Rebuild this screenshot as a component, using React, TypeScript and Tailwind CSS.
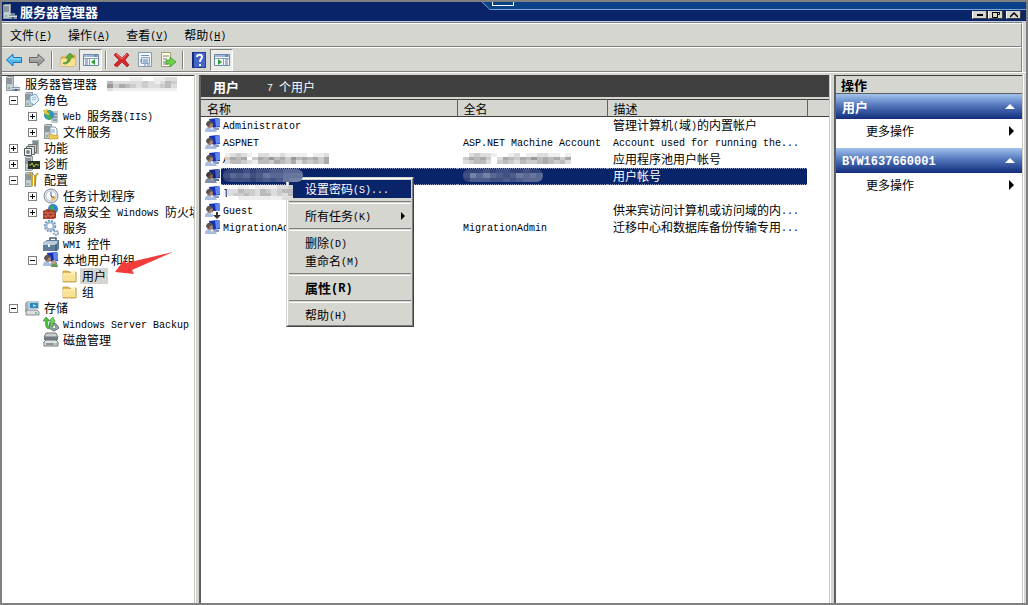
import type { ReactNode } from 'react'

type IconName =
  | 'server' | 'roles' | 'web' | 'files' | 'features' | 'diagnostics' | 'config' | 'clock'
  | 'firewall' | 'gears' | 'toolbox' | 'users' | 'folder' | 'storage' | 'backup' | 'disk'
  | 'user' | 'guest' | 'back' | 'forward' | 'up' | 'paneLeft' | 'paneRight' | 'remove'
  | 'properties' | 'exportList' | 'help'

const tower = (
  <>
    <path d="M1 1 3 0h6v14l-2 1H1z" fill="#8d979c" />
    <path d="M2 1h6v13H2z" fill="#c3ccd0" />
    <path d="M2 3h5M2 5h5M2 7h5" stroke="#566168" />
    <path d="M3 12h2" stroke="#4b9a52" />
  </>
)

const person = (
  <>
    <path d="M4 1 13 0l2 1v8l-9 1z" fill="#1430b8" />
    <path d="M10 1l3-1 2 1v7l-4 1z" fill="#5f86ee" />
    <path d="M9 10h5v2H9z" fill="#8b97b5" />
    <path d="M0 14c0-4 2-5 5-5s6 2 7 5z" fill="#a9bde0" />
    <path d="M5 9l2 3 1-3z" fill="#fff" />
    <circle cx="5" cy="7" r="3" fill="#a98468" />
    <path d="M1 7c0-3 2-5 5-4l2 2-3 1-1 3z" fill="#5d5350" />
  </>
)

const windowFrame = (
  <>
    <path d="M.5 2.5h15v11H.5z" fill="#f6f9fc" stroke="#6f86a5" />
    <path d="M1 3h14v2H1z" fill="#9fb9db" />
    <path d="M11 4h3" stroke="#40608c" />
    <path d="M1 6.500h14" stroke="#8aa0bd" />
  </>
)

const icons: Record<IconName, ReactNode> = {
  server: (
    <>
      {tower}
      <path d="M7 11h8v4H7z" fill="#8398a9" />
      <path d="M8 10h5M7 12.500h8" stroke="#cfdce5" />
      <path d="M10 13h2v2h-2z" fill="#45596a" />
    </>
  ),
  roles: (
    <>
      {tower}
      <path d="M6 4l6-2 3 6-5 5-4-3z" fill="#e9f4fd" stroke="#73a5cf" />
      <path d="M8 6l4-1M8 8l4-1" stroke="#8fb7da" />
    </>
  ),
  web: (
    <>
      <path d="M9 3h6v12H8z" fill="#bec8cd" />
      <path d="M10 6h4M10 9h4M10 12h4" stroke="#657981" />
      <circle cx="6" cy="7" r="5" fill="#2d93c4" />
      <path d="M2 5c2-3 5-3 6-2L6 7l3 3-2 2C4 12 4 8 2 7z" fill="#4fae4a" />
      <path d="M0 2l5-1-1 3 3 2-2 1-4-2z" fill="#e8c640" />
    </>
  ),
  files: (
    <>
      {tower}
      <path d="M7 3h5l2 2v7H7z" fill="#fff" stroke="#7d98b0" />
      <path d="M8 6h4M8 8h4" stroke="#74a3cf" />
      <path d="M6 10h3l1 1h5v4H6z" fill="#f0c653" stroke="#b38c2e" strokeWidth=".5" />
    </>
  ),
  features: (
    <>
      <path d="M8 0h7v14H8z" fill="#aab3b7" />
      <path d="M9 2h5M9 4h5" stroke="#59646a" />
      <path d="M4.500 4.500h8v8h-8z" fill="#c7ced1" stroke="#777" />
      <path d="M2.500 6.500h8v8h-8z" fill="#dbe0e2" stroke="#666" />
      <path d="M.500 8.500h7v7h-7z" fill="#eef1f2" stroke="#555" />
      <circle cx="4" cy="12" r="2" fill="#7a8790" />
    </>
  ),
  diagnostics: (
    <>
      {tower}
      <path d="M4 5h12v8H4z" fill="#253129" />
      <path d="M5 9h2l1-2 2 4 2-3 1 1h2" fill="none" stroke="#b4c43d" />
    </>
  ),
  config: (
    <>
      {tower}
      <path d="M6 1l2 3v10M14 1l-3 4v9" fill="none" stroke="#d9a322" strokeWidth="2" />
      <path d="M9 2l3 3-1 10" fill="none" stroke="#7f8a92" strokeWidth="1" />
    </>
  ),
  clock: (
    <>
      <circle cx="8" cy="8" r="7" fill="#e5e9ed" stroke="#7f8990" />
      <circle cx="8" cy="8" r="5" fill="#fff" stroke="#b9c4cc" />
      <path d="M8 8h5A5 5 0 0 1 8 13z" fill="#f0c869" />
      <path d="M8 4v4l3 2" fill="none" stroke="#34588c" />
    </>
  ),
  firewall: (
    <>
      <circle cx="10" cy="5" r="5" fill="#2f87c8" />
      <path d="M7 2l4 1-1 3 4 1-2 3-4-3z" fill="#4da74d" />
      <path d="M0 7l4-2 9 2v7l-3 1H0z" fill="#a8321f" />
      <path d="M0 9h12M0 12h12M3 6v3M8 7v2M5 9v3M10 9v3M3 12v3M8 12v3" stroke="#dd9a8b" strokeWidth=".6" />
    </>
  ),
  gears: (
    <>
      <circle cx="7" cy="6" r="5" fill="none" stroke="#7899bb" strokeWidth="2.500" strokeDasharray="2 1" />
      <circle cx="7" cy="6" r="3.500" fill="#fff" stroke="#9db9d4" strokeWidth="2" />
      <circle cx="13" cy="13" r="2" fill="#fff" stroke="#7899bb" strokeWidth="2" strokeDasharray="1.500 .7" />
    </>
  ),
  toolbox: (
    <>
      <path d="M7 5V2h6v3" fill="none" stroke="#4a6176" strokeWidth="1.500" />
      <path d="M0 7l4-3h12v9l-2 2H0z" fill="#5f7d99" />
      <path d="M0 7l4-2h11l-2 4H0z" fill="#b9cbd9" />
      <path d="M5 8h2v3H5z" fill="#eef3f6" />
      <path d="M13 8v7" stroke="#364f66" />
    </>
  ),
  users: (
    <>
      {person}
      <path d="M8 15c0-3 1-4 3-4s4 1 4 4z" fill="#6a9a57" />
      <circle cx="11" cy="10" r="2" fill="#c79c77" />
    </>
  ),
  folder: (
    <>
      <path d="M1 3h5l1 1h7v10H1z" fill="#e2b954" stroke="#b48f35" strokeWidth=".7" />
      <path d="M9 2h4v3H9z" fill="#fff8de" />
      <path d="M1 5h13v9H1z" fill="#f9e293" />
      <path d="M2 6h11" stroke="#fff4c6" />
      <path d="M1 13.500h13V5" fill="none" stroke="#c9a345" strokeWidth=".8" />
    </>
  ),
  storage: (
    <>
      <path d="M1 3l3-2v11H1z" fill="#a7b2b8" />
      <path d="M4 1h11v8H4z" fill="#b8cbd6" />
      <path d="M6 3h8v5H6z" fill="#2b87b9" />
      <path d="M9 4l4 2-4 1z" fill="#9ed5ee" />
      <path d="M2 10h11l2 2v3H2z" fill="#d9dee1" stroke="#68757d" strokeWidth=".8" />
      <path d="M11 13h2" stroke="#31a24a" />
    </>
  ),
  backup: (
    <>
      <path d="M7 6l6 2 3 4-5 3-5-3z" fill="#a8b0b5" stroke="#646d72" />
      <circle cx="11" cy="11" r="2" fill="#ecf0f2" stroke="#737c81" />
      <path d="M5 13C2 11 2 6 3 5L0 5l3-4 4 4H5c-1 3 0 5 2 7z" fill="#4fc13f" stroke="#288b27" strokeWidth=".6" />
      <path d="M10 1l2 5-2 1v4l-3-2 1-4-1-1z" fill="#73d356" stroke="#288b27" strokeWidth=".6" />
    </>
  ),
  disk: (
    <>
      <path d="M3 1h10l2 4H1z" fill="#c9ced1" stroke="#71777a" />
      <path d="M1 5h14v3H1z" fill="#747b80" />
      <path d="M3 8h10l2 2v4H1v-4z" fill="#dfe3e4" stroke="#6d7478" />
      <path d="M3 12h8" stroke="#444" />
      <path d="M12 12h2" stroke="#4ca34c" />
    </>
  ),
  user: person,
  guest: (
    <>
      {person}
      <path d="M8 8h8v8H8z" fill="#fff" />
      <path d="M11 9h2v3h3l-4 4-4-4h3z" fill="#333" />
    </>
  ),
  back: (
    <>
      <path d="M.500 8 7 2v3.500h8.500v5H7V14z" fill="#4bb8ef" stroke="#1d72b8" />
      <path d="M3 8l3-3v2h9" fill="none" stroke="#a9e2fb" />
    </>
  ),
  forward: (
    <>
      <path d="M15.500 8 9 2v3.500H.500v5H9V14z" fill="#9b9c9b" stroke="#686968" />
      <path d="M1 7h9V5l3 3" fill="none" stroke="#c6c6c4" />
    </>
  ),
  up: (
    <>
      <path d="M1 5h5l1-2h8v11H1z" fill="#efc75b" stroke="#b78c2c" strokeWidth=".6" />
      <path d="M1 7h14v7H1z" fill="#fbe291" />
      <path d="M3 11c4 0 5-3 5-5H6l4-5 4 4h-3c0 4-3 7-7 7z" fill="#58b436" stroke="#2c7b22" strokeWidth=".6" />
    </>
  ),
  paneLeft: (
    <>
      {windowFrame}
      <path d="M6.500 6v8" stroke="#8aa0bd" />
      <path d="M2 8h3M2 10h3M2 12h3" stroke="#4f78ac" />
      <path d="M12 7v6L8 10z" fill="#2c9d33" />
    </>
  ),
  paneRight: (
    <>
      {windowFrame}
      <path d="M9.500 6v8" stroke="#8aa0bd" />
      <path d="M11 8h3M11 10h3M11 12h3" stroke="#4f78ac" />
      <path d="M4 7v6l4-3z" fill="#2c9d33" />
    </>
  ),
  remove: (
    <>
      <path d="M2 1l6 5 5-5 2 2-4 5 4 5-2 2-5-5-5 5-3-2 5-5-5-5z" fill="#d7262a" stroke="#9c1317" strokeWidth=".6" />
      <path d="M2 2l6 5 5-5" fill="none" stroke="#ef7777" />
    </>
  ),
  properties: (
    <>
      <path d="M1.500.500h13v14h-13z" fill="#f5f8fa" stroke="#8399ad" />
      <path d="M4 3.500h8" stroke="#6e92b6" />
      <path d="M4.500 5.500h8v6h-8z" fill="#dce8f1" stroke="#8ba6bd" />
      <path d="M3 8h2M6 8h5M3 10h2M6 10h5M7 13h2M10 13h3" stroke="#5f8db8" />
    </>
  ),
  exportList: (
    <>
      <path d="M1.500.500h9v14h-9z" fill="#fffbe3" stroke="#a69b70" />
      <path d="M3 4h6M3 7h4M3 10h4M3 12h5" stroke="#6d7d9c" />
      <path d="M6 8h4V5l6 5-6 5v-3H6z" fill="#6ed04d" stroke="#35912b" strokeWidth=".7" />
    </>
  ),
  help: (
    <>
      <path d="M1 0h14v16H1z" fill="#23429d" />
      <path d="M3 1h11v14H3z" fill="#4267c8" />
      <path d="M1 0h2v16H1z" fill="#162d75" />
      <path d="M6 5c0-3 5-3 5 0 0 2-2 2-2 5" fill="none" stroke="#fff" strokeWidth="2" />
      <path d="M8 12h2v2H8z" fill="#fff" />
    </>
  ),
}

const Icon = ({ name, className = 'size-4' }: { name: IconName; className?: string }) => (
  <svg viewBox="0 0 16 16" className={`shrink-0 ${className}`} aria-hidden="true">
    {icons[name]}
  </svg>
)

const latinFace = "align-[1px] leading-none font-['Liberation_Mono',monospace]"

// Latin runs use a half-width mono face so they keep step with the full-width characters.
const Text = ({ children, hotkey, latin = 'text-[10px]' }: { children: string; hotkey?: string; latin?: string }) => (
  <span className="whitespace-pre">
    {children.split(/([\x20-\x7e]+)/).map((run, i) =>
      i % 2 === 0 ? (
        run
      ) : (
        <span key={i} className={`${latinFace} ${latin}`}>
          {run}
        </span>
      ),
    )}
    {hotkey && (
      <span className={`${latinFace} ${latin}`}>
        (<u>{hotkey}</u>)
      </span>
    )}
  </span>
)

// Each hex digit is the grey of one block.
const Mosaic = ({ rows, className, dark }: { rows: string[]; className: string; dark?: boolean }) => (
  <svg
    viewBox={`0 0 ${rows[0].length} ${rows.length}`}
    preserveAspectRatio="none"
    shapeRendering="crispEdges"
    className={`shrink-0 ${className}`}
    aria-hidden="true"
  >
    {rows.map((row, y) =>
      row.split('').map((c, x) => {
        const v = parseInt(c, 16) * 17
        const fill = dark ? `rgb(${v * 0.75},${v * 0.75 + 16},${v * 0.5 + 88})` : `rgb(${v},${v},${v})`
        return <rect key={`${x}-${y}`} x={x} y={y} width="1" height="1" fill={fill} />
      }),
    )}
  </svg>
)

type Node = {
  label: string
  icon: IconName
  state?: 'open' | 'closed'
  selected?: boolean
  children?: Node[]
}

const tree: Node[] = [
  {
    label: '角色', icon: 'roles', state: 'open',
    children: [
      { label: 'Web 服务器(IIS)', icon: 'web', state: 'closed' },
      { label: '文件服务', icon: 'files', state: 'closed' },
    ],
  },
  { label: '功能', icon: 'features', state: 'closed' },
  { label: '诊断', icon: 'diagnostics', state: 'closed' },
  {
    label: '配置', icon: 'config', state: 'open',
    children: [
      { label: '任务计划程序', icon: 'clock', state: 'closed' },
      { label: '高级安全 Windows 防火墙', icon: 'firewall', state: 'closed' },
      { label: '服务', icon: 'gears' },
      { label: 'WMI 控件', icon: 'toolbox' },
      {
        label: '本地用户和组', icon: 'users', state: 'open',
        children: [
          { label: '用户', icon: 'folder', selected: true },
          { label: '组', icon: 'folder' },
        ],
      },
    ],
  },
  {
    label: '存储', icon: 'storage', state: 'open',
    children: [
      { label: 'Windows Server Backup', icon: 'backup' },
      { label: '磁盘管理', icon: 'disk' },
    ],
  },
]

const TreeItem = ({ node }: { node: Node }) => (
  <li>
    <div className="flex h-4 items-center">
      <span className="flex w-[15px] shrink-0">
        {node.state && (
          <button type="button" aria-label={node.label} className="size-[9px] border border-[#808080] bg-white">
            <svg viewBox="0 0 7 7" className="block size-[7px]">
              <path d={node.state === 'open' ? 'M1 3h5v1H1z' : 'M1 3h5v1H1zM3 1h1v5H3z'} fill="#000" shapeRendering="crispEdges" />
            </svg>
          </button>
        )}
      </span>
      <Icon name={node.icon} />
      <button type="button" className={`ml-0.5 h-4 px-0.5 leading-4 ${node.selected ? 'bg-[#d5d6cf]' : ''}`}>
        <Text>{node.label}</Text>
      </button>
    </div>
    {node.children && (
      <ul className="pl-[19px]">
        {node.children.map((child) => (
          <TreeItem key={child.label} node={child} />
        ))}
      </ul>
    )}
  </li>
)

type User = { name: ReactNode; fullName?: ReactNode; note: string; icon?: IconName; selected?: boolean }

const users: User[] = [
  { name: <Text>Administrator</Text>, note: '管理计算机(域)的内置帐户' },
  {
    name: <Text>ASPNET</Text>,
    fullName: <Text>ASP.NET Machine Account</Text>,
    note: 'Account used for running the...',
  },
  {
    name: (
      <>
        <Text>A</Text>
        <Mosaic className="-ml-1 h-[11px] w-[104px]" rows={['edcdefddeedeeeefeed', 'cabafcab9bac9babaca', 'dbbcdebbcabcadbcbca']} />
      </>
    ),
    fullName: <Mosaic className="h-[11px] w-[108px]" rows={['fdcddeffedfeeddeefe', 'cabacfdabcab9babaca', 'dcbbdfcbcdbccbabcbd']} />,
    note: '应用程序池用户帐号',
  },
  {
    name: <Mosaic dark className="relative z-20 h-[13px] w-20 rounded-md" rows={['444545566777', '576756877888', '455545656899']} />,
    fullName: <Mosaic dark className="h-[13px] w-20 rounded-md" rows={['444545544544', '597976568787', '466655656777']} />,
    note: '用户帐号',
    selected: true,
  },
  {
    name: (
      <>
        <Text>l</Text>
        <Mosaic className="relative z-20 -ml-0.5 h-[15px] w-[66px]" rows={['ffeefeeeeddc', 'ddbccdbcdcbb', 'dccbcdbbdcdb', 'ffeeeeeeeedd']} />
      </>
    ),
    note: '',
  },
  { name: <Text>Guest</Text>, note: '供来宾访问计算机或访问域的内...', icon: 'guest' },
  { name: <Text>MigrationAdmin</Text>, fullName: <Text>MigrationAdmin</Text>, note: '迁移中心和数据库备份传输专用...' },
]

const UserRow = ({ user }: { user: User }) => {
  const mark = user.selected ? 'border-dotted border-[#8f9cc4] bg-[#0a246a] text-white' : 'border-transparent'
  return (
    <tr className="h-[17px]">
      <td className="p-0">
        <div className="flex h-[17px] items-center pl-1">
          <Icon name={user.icon ?? 'user'} className={user.selected ? 'size-4 brightness-75' : 'size-4'} />
          <span className={`flex h-[17px] flex-1 items-center border-y pb-0.5 pl-0.5 ${mark}`}>{user.name}</span>
        </div>
      </td>
      <td className="p-0">
        <div className={`flex h-[17px] items-center border-y pb-0.5 pl-1.5 ${mark}`}>{user.fullName}</div>
      </td>
      <td className="p-0">
        <div className={`flex h-[17px] items-center border-y pb-0.5 pl-1.5 ${mark}`}>
          <Text>{user.note}</Text>
        </div>
      </td>
      <td className="p-0" />
    </tr>
  )
}

const MenuItem = ({ label, hotkey, active, bold, more }: { label: string; hotkey: string; active?: boolean; bold?: boolean; more?: boolean }) => (
  <button
    type="button"
    role="menuitem"
    className={`flex h-[18px] w-full items-center justify-between pr-1.5 pl-4 ${active ? 'bg-[#0a246a] text-white' : ''} ${bold ? 'text-[13px] font-bold' : ''}`}
  >
    <Text latin={bold ? 'text-[12px]' : 'text-[10px]'}>{`${label}(${hotkey})${active ? '...' : ''}`}</Text>
    {more && (
      <svg viewBox="0 0 4 8" className="h-2 w-1">
        <path d="M0 0l4 4-4 4z" />
      </svg>
    )}
  </button>
)

const Separator = () => <hr className="my-[3px] h-[3px] border-t border-b border-t-[#808080] border-b-white" />

const ContextMenu = () => (
  <div
    role="menu"
    className="absolute top-[78px] left-[85px] z-10 w-32 border border-t-[#d5d6cf] border-r-[#404040] border-b-[#404040] border-l-[#d5d6cf] bg-[#d5d6cf]"
  >
    <div className="border border-t-white border-r-[#808080] border-b-[#808080] border-l-white p-px">
      <MenuItem label="设置密码" hotkey="S" active />
      <Separator />
      <MenuItem label="所有任务" hotkey="K" more />
      <Separator />
      <MenuItem label="删除" hotkey="D" />
      <MenuItem label="重命名" hotkey="M" />
      <Separator />
      <MenuItem label="属性" hotkey="R" bold />
      <Separator />
      <MenuItem label="帮助" hotkey="H" />
    </div>
  </div>
)

const ToolButton = ({ icon, label, pressed }: { icon: IconName; label: string; pressed?: boolean }) => (
  <button
    type="button"
    aria-label={label}
    className={`flex h-[22px] w-[23px] items-center justify-center ${pressed ? 'border border-t-[#808080] border-r-white border-b-white border-l-[#808080] bg-[#ecece8]' : ''}`}
  >
    <Icon name={icon} />
  </button>
)

const ToolDivider = () => <span className="mx-[3px] h-[18px] w-0.5 border-r border-l border-r-white border-l-[#808080]" />

const ActionGroup = ({ title }: { title: string }) => (
  <section>
    <h3 className="flex h-[25px] items-center justify-between bg-linear-to-b from-[#a3c3ee] via-[#4e70b6] to-[#122d7c] pr-[7px] pl-1.5 text-[13px] font-bold text-white">
      <Text latin="text-[12px]">{title}</Text>
      <svg viewBox="0 0 10 5" className="h-[5px] w-2.5" fill="#fff">
        <path d="M5 0l5 5H0z" />
      </svg>
    </h3>
    <button type="button" className="flex h-[25px] w-full items-center justify-between pr-2 pb-0.5 pl-[30px]">
      <Text>更多操作</Text>
      <svg viewBox="0 0 5 10" className="h-2.5 w-[5px]">
        <path d="M0 0l5 5-5 5z" />
      </svg>
    </button>
  </section>
)

const Splitter = () => (
  <div className="w-[5px] shrink-0 border-l border-[#c8c9c2] bg-[#d5d6cf]">
    <div className="h-full w-px bg-white" />
  </div>
)

const menus = [
  ['文件', 'F'],
  ['操作', 'A'],
  ['查看', 'V'],
  ['帮助', 'H'],
]

const captionButton = 'flex h-2 w-[15px] items-center justify-center border border-t-0 border-r-[#404040] border-b-[#404040] border-l-white bg-[#d5d6cf]'

const App = () => {
  return (
    <div className="relative flex min-h-screen flex-col overflow-hidden border-2 border-[#808080] bg-[#d5d6cf] font-['Noto_Sans_CJK_SC',sans-serif] text-[12px] leading-4 text-black">
      <header className="flex h-5 items-center justify-between border-b border-[#c3cbe0] bg-[#0a246a] pr-[5px]">
        <h1 className="flex items-center gap-0.5 text-[13px] font-bold text-white">
          <Icon name="server" />
          <Text>服务器管理器</Text>
        </h1>
        <div className="flex self-end pb-0.5">
          <button type="button" aria-label="最小化" className={captionButton}>
            <svg viewBox="0 0 6 2" className="h-0.5 w-1.5"><path d="M0 0h6v2H0z" /></svg>
          </button>
          <button type="button" aria-label="还原" className={`ml-px ${captionButton}`}>
            <svg viewBox="0 0 8 6" className="h-1.5 w-2" fill="none" stroke="#000"><path d="M.500 0v5.500h5V0M6 2.500h1.500V0M0 .500h8" /></svg>
          </button>
          <button type="button" aria-label="关闭" className={`ml-[3px] ${captionButton}`}>
            <svg viewBox="0 0 8 6" className="h-1.5 w-2" fill="none" stroke="#000" strokeWidth="1.500"><path d="M0 5l4-4 4 4" /></svg>
          </button>
        </div>
      </header>

      {/* remote session bar hanging over the caption */}
      <div className="absolute top-0 right-0 left-[478px] flex h-2">
        <svg viewBox="0 0 12 8" className="h-2 w-3 shrink-0">
          <path d="M2 0l8 7.500h2V0z" fill="#0b4188" />
          <path d="M2 0l8 7.500h2" fill="none" stroke="#7fa3d4" />
        </svg>
        <div className="flex-1 border-b border-[#7fa3d4] bg-[#0b4188]">
          <div className="h-1 w-[22px] border border-t-0 border-white" />
        </div>
      </div>

      <div className="mr-[3px] border-t border-r border-t-[#808080] border-r-white">
        <nav className="flex h-6 items-center gap-4 border-t border-r border-b border-t-white border-r-[#808080] border-b-[#808080] pl-2">
          {menus.map(([label, hotkey]) => (
            <button key={hotkey} type="button">
              <Text hotkey={hotkey}>{label}</Text>
            </button>
          ))}
        </nav>
        <div role="toolbar" className="flex h-[25px] items-center border-t border-r border-b border-t-white border-r-[#808080] border-b-[#808080]">
          <ToolButton icon="back" label="后退" />
          <ToolButton icon="forward" label="前进" />
          <ToolDivider />
          <ToolButton icon="up" label="上一级" />
          <ToolButton icon="paneLeft" label="显示/隐藏控制台树" pressed />
          <ToolDivider />
          <ToolButton icon="remove" label="删除" />
          <ToolButton icon="properties" label="属性" />
          <ToolButton icon="exportList" label="导出列表" />
          <ToolDivider />
          <ToolButton icon="help" label="帮助" />
          <ToolButton icon="paneRight" label="显示/隐藏操作窗格" pressed />
        </div>
      </div>
      <div className="h-[3px] border-t border-white" />

      <main className="flex flex-1">
        <aside className="relative w-48 shrink-0 overflow-hidden border-t border-[#404040] bg-white">
          <div className="flex h-4 items-center pl-[3px]">
            <Icon name="server" />
            <span className="ml-1">
              <Text>服务器管理器 </Text>
            </span>
            <Mosaic className="ml-1 h-[14px] w-[70px]" rows={['ffffeeffeedd', 'bdddddcdedbc', '9cabcdcddcbd', 'deeeeeeeeeee']} />
          </div>
          <ul className="pl-[7px]">
            {tree.map((node) => (
              <TreeItem key={node.label} node={node} />
            ))}
          </ul>
          <svg viewBox="0 0 58 22" className="absolute top-44 left-[113px] h-[22px] w-[58px]">
            <path d="M0 20L9 8l2 3L58 0 17 18l2 4z" fill="#f23c3c" />
          </svg>
        </aside>
        <Splitter />

        <section className="flex min-w-0 flex-1 flex-col border-t border-l-2 border-t-[#404040] border-l-[#606060] bg-white">
          <div className="flex h-[21px] items-center gap-7 bg-[#404040] pl-3 text-white">
            <h2 className="text-[13px] font-bold">用户</h2>
            <Text>7 个用户</Text>
          </div>
          <div className="h-0.5 bg-[#d5d6cf]" />
          <div className="relative flex-1">
            <table className="w-full table-fixed border-collapse text-left">
              <thead>
                <tr className="h-[17px] border-t border-b border-[#404040] bg-[#d5d6cf]">
                  <th className="w-64 border-r border-[#606060] p-0 pl-1.5 leading-[15px] font-normal">名称</th>
                  <th className="w-[150px] border-r border-[#606060] p-0 pl-1.5 leading-[15px] font-normal">全名</th>
                  <th className="w-[200px] border-r border-[#606060] p-0 pl-1.5 leading-[15px] font-normal">描述</th>
                  <th className="p-0" />
                </tr>
              </thead>
              <tbody>
                {users.map((user, i) => (
                  <UserRow key={i} user={user} />
                ))}
              </tbody>
            </table>
            <ContextMenu />
          </div>
        </section>
        <Splitter />

        <aside className="w-[188px] shrink-0 border-t border-l-2 border-t-[#404040] border-l-[#606060] bg-white">
          <h2 className="h-[18px] border-b border-[#606060] bg-[#d5d6cf] pl-[5px] text-[13px] leading-[17px] font-bold">操作</h2>
          <div className="flex flex-col gap-1">
            <ActionGroup title="用户" />
            <ActionGroup title="BYW1637660001" />
          </div>
        </aside>
        <div className="w-1 shrink-0 border-l border-[#c8c9c2] bg-[#d5d6cf]">
          <div className="h-full w-px bg-white" />
        </div>
      </main>
    </div>
  )
}

export default App
